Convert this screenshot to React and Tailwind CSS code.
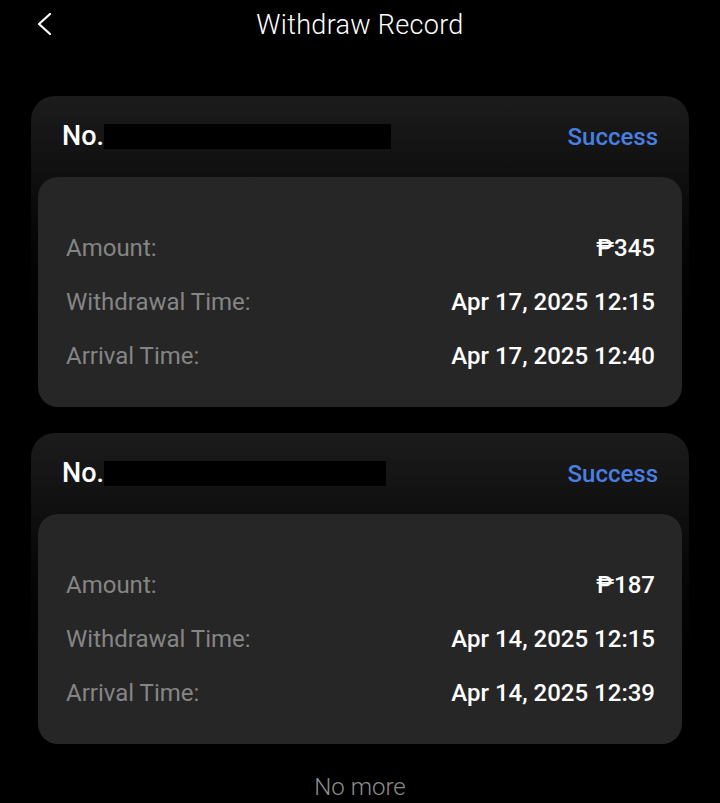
const records = [
  { id: 1, amount: "₱345", withdrawnAt: "Apr 17, 2025 12:15", arrivedAt: "Apr 17, 2025 12:40", maskWidth: "w-[287px]" },
  { id: 2, amount: "₱187", withdrawnAt: "Apr 14, 2025 12:15", arrivedAt: "Apr 14, 2025 12:39", maskWidth: "w-[282px]" },
];

function Row({ label, value }) {
  return (
    <div className="flex h-[54px] items-center justify-between">
      <span className="text-[24px] text-[#858585]">{label}</span>
      <span className="text-[24px] font-medium text-white">{value}</span>
    </div>
  );
}

function RecordCard({ record }) {
  return (
    <div className="rounded-[24px] bg-gradient-to-b from-[#1c1c1c] to-black px-[7px] pb-[7px]">
      <div className="flex h-[81px] items-center justify-between pl-[24px] pr-[24px]">
        <div className="flex items-center">
          <span className="text-[27px] font-medium text-white">No.</span>
          <span className={`h-[25px] bg-black ${record.maskWidth}`} />
        </div>
        <span className="text-[24px] font-medium text-[#4a7fe2]">Success</span>
      </div>
      <div className="rounded-[20px] bg-[#262626] pl-[28px] pr-[27px] pt-[44px] pb-[24px]">
        <Row label="Amount:" value={record.amount} />
        <Row label="Withdrawal Time:" value={record.withdrawnAt} />
        <Row label="Arrival Time:" value={record.arrivedAt} />
      </div>
    </div>
  );
}

export default function App() {
  return (
    <div className="h-[803px] w-[720px] overflow-hidden bg-black font-['Roboto',sans-serif]">
      <header className="relative flex h-[50px] items-center justify-center">
        <button className="absolute left-[37px] top-[13px] text-white">
          <svg width="15" height="22" viewBox="0 0 15 22" fill="none" stroke="currentColor" strokeWidth="2.2" strokeLinecap="round" strokeLinejoin="round">
            <polyline points="13,1 2,11 13,21" />
          </svg>
        </button>
        <h1 className="text-[27px] font-light tracking-[0.3px] text-white">Withdraw Record</h1>
      </header>

      <main className="flex flex-col gap-[19px] px-[31px] pt-[46px]">
        {records.map((record) => (
          <RecordCard key={record.id} record={record} />
        ))}
      </main>

      <p className="mt-[18px] text-center text-[24px] font-light text-[#8c8c8c]">No more</p>
    </div>
  );
}
